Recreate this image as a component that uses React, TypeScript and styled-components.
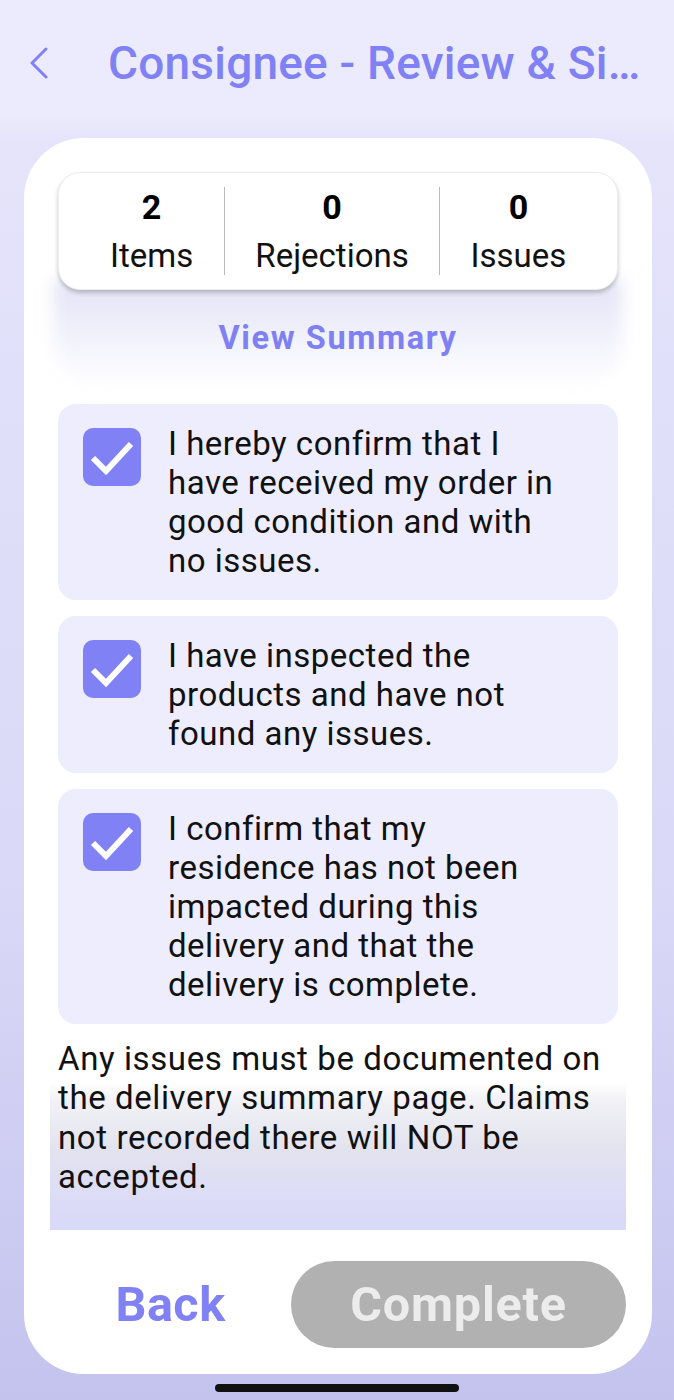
import styled, { createGlobalStyle } from "styled-components";

const GlobalStyle = createGlobalStyle`
  html, body {
    margin: 0;
    padding: 0;
  }
  body {
    font-family: Roboto, "Noto Sans", "Liberation Sans", sans-serif;
    -webkit-font-smoothing: antialiased;
  }
`;

const Page = styled.div`
  width: 674px;
  height: 1400px;
  overflow: hidden;
  display: flex;
  flex-direction: column;
  background: linear-gradient(180deg, #ecebfd 0px, #ecebfd 115px, #e5e4fb 140px, #d9d8f7 900px, #c4c3ee 1400px);
`;

const Header = styled.header`
  height: 115px;
  flex-shrink: 0;
  display: flex;
  align-items: center;
  padding: 10px 30px 0 24px;
  background: #ecebfd;
  box-sizing: border-box;
`;

const BackIcon = styled.button`
  width: 30px;
  height: 40px;
  padding: 0;
  margin: 0 54px 0 0;
  border: none;
  background: none;
  display: flex;
  align-items: center;
  justify-content: center;
  flex-shrink: 0;
`;

const Title = styled.h1`
  margin: 0;
  flex: 1;
  min-width: 0;
  font-size: 46px;
  font-weight: 500;
  color: #8081f5;
  white-space: nowrap;
  overflow: hidden;
  text-overflow: ellipsis;
  letter-spacing: 0.2px;
`;

const Card = styled.main`
  margin: 23px 22px 0 24px;
  height: 1236px;
  flex-shrink: 0;
  background: #ffffff;
  border-radius: 60px;
  padding: 34px 26px 26px;
  box-sizing: border-box;
  display: flex;
  flex-direction: column;
`;

const Stats = styled.section`
  margin: 0 8px;
  height: 118px;
  padding: 0 20px;
  box-sizing: border-box;
  border-radius: 22px;
  background: #fff;
  border: 1px solid #ececec;
  box-shadow: 0 3px 4px rgba(0, 0, 0, 0.22);
  display: flex;
  align-items: center;
  position: relative;
  z-index: 1;
`;

const Stat = styled.div<{ $divider?: boolean; $grow: number }>`
  flex: ${(p) => p.$grow};
  height: 88px;
  display: flex;
  flex-direction: column;
  align-items: center;
  justify-content: flex-start;
  border-left: ${(p) => (p.$divider ? "1.5px solid #b9b9b9" : "none")};
`;

const StatValue = styled.div`
  font-size: 34px;
  font-weight: 700;
  color: #000;
  line-height: 40px;
  margin-top: 0;
`;

const StatLabel = styled.div`
  font-size: 33px;
  color: #111;
  line-height: 50px;
  margin-top: 4px;
`;

const SummaryArea = styled.div`
  position: relative;
  margin: -10px 0 0;
  height: 124px;
  padding-top: 10px;
  box-sizing: border-box;
  display: flex;
  align-items: center;
  justify-content: center;

  &::before {
    content: "";
    position: absolute;
    inset: 0 4px 14px;
    border-radius: 0 0 50px 50px;
    background: linear-gradient(180deg, #e2e2f6 0%, #eeeefa 40%, #f8f8fe 75%, rgba(255, 255, 255, 0) 100%);
    filter: blur(8px);
  }
`;

const SummaryLink = styled.a`
  position: relative;
  font-size: 32.5px;
  font-weight: 700;
  color: #7f80f3;
  letter-spacing: 1.6px;
  margin-bottom: 18px;
`;

const Agreements = styled.div`
  display: flex;
  flex-direction: column;
  gap: 16px;
  margin: 0 8px;
`;

const Agreement = styled.label`
  display: flex;
  align-items: flex-start;
  background: #ededfd;
  border-radius: 18px;
  padding: 20px 16px 20px 25px;
`;

const Box = styled.span`
  width: 58px;
  height: 58px;
  flex-shrink: 0;
  margin-top: 4px;
  border-radius: 10px;
  background: #8081f5;
  display: flex;
  align-items: center;
  justify-content: center;
`;

const AgreementText = styled.span`
  width: 402px;
  margin-left: 27px;
  font-size: 33px;
  line-height: 39px;
  color: #111;
  letter-spacing: 0.5px;
`;

const NoteArea = styled.div`
  margin-top: 15px;
  padding: 0 8px 34px;
  background: linear-gradient(180deg, #ffffff 0px, #ffffff 44px, #f1f1f6 62px, #e3e3ef 110px, #dcdcf7 160px, #d9d9f9 190px);
`;

const Note = styled.p`
  margin: 0;
  font-size: 33px;
  line-height: 39.3px;
  color: #111;
  letter-spacing: 0.6px;
`;

const Footer = styled.footer`
  margin-top: auto;
  display: flex;
  align-items: center;
`;

const TextButton = styled.button`
  flex: 1;
  border: none;
  background: none;
  font-family: inherit;
  font-size: 48.5px;
  font-weight: 700;
  color: #8081f5;
  padding: 0;
  letter-spacing: 0.5px;
`;

const PillButton = styled.button`
  width: 335px;
  height: 87px;
  border: none;
  border-radius: 44px;
  background: #b1b1b1;
  color: #ececec;
  font-family: inherit;
  font-size: 48.5px;
  font-weight: 700;
  letter-spacing: 0.8px;
`;

const HomeBar = styled.div`
  width: 244px;
  height: 8px;
  border-radius: 4px;
  background: #111;
  margin: 10px auto 0;
`;

const agreements = [
  "I hereby confirm that I have received my order in good condition and with no issues.",
  "I have inspected the products and have not found any issues.",
  "I confirm that my residence has not been impacted during this delivery and that the delivery is complete.",
];

export default function App() {
  return (
    <>
      <GlobalStyle />
      <Page>
        <Header>
          <BackIcon aria-label="Back">
            <svg width="22" height="32" viewBox="0 0 22 32" fill="none">
              <path d="M18 2 L4 16 L18 30" stroke="#8081f5" strokeWidth="3" strokeLinecap="round" strokeLinejoin="round" />
            </svg>
          </BackIcon>
          <Title>Consignee - Review &amp; Sign</Title>
        </Header>
        <Card>
          <Stats>
            <Stat $grow={146}>
              <StatValue>2</StatValue>
              <StatLabel>Items</StatLabel>
            </Stat>
            <Stat $divider $grow={215}>
              <StatValue>0</StatValue>
              <StatLabel>Rejections</StatLabel>
            </Stat>
            <Stat $divider $grow={158}>
              <StatValue>0</StatValue>
              <StatLabel>Issues</StatLabel>
            </Stat>
          </Stats>
          <SummaryArea>
            <SummaryLink>View Summary</SummaryLink>
          </SummaryArea>
          <Agreements>
            {agreements.map((text) => (
              <Agreement key={text}>
                <Box>
                  <svg width="58" height="58" viewBox="0 0 58 58" fill="none">
                    <path d="M10 30 L23 43 L48 16" stroke="#fff" strokeWidth="6" strokeLinejoin="miter" />
                  </svg>
                </Box>
                <AgreementText>{text}</AgreementText>
              </Agreement>
            ))}
          </Agreements>
          <NoteArea>
            <Note>
              Any issues must be documented on the delivery summary page. Claims not recorded there will NOT be
              accepted.
            </Note>
          </NoteArea>
          <Footer>
            <TextButton>Back</TextButton>
            <PillButton disabled>Complete</PillButton>
          </Footer>
        </Card>
        <HomeBar />
      </Page>
    </>
  );
}
